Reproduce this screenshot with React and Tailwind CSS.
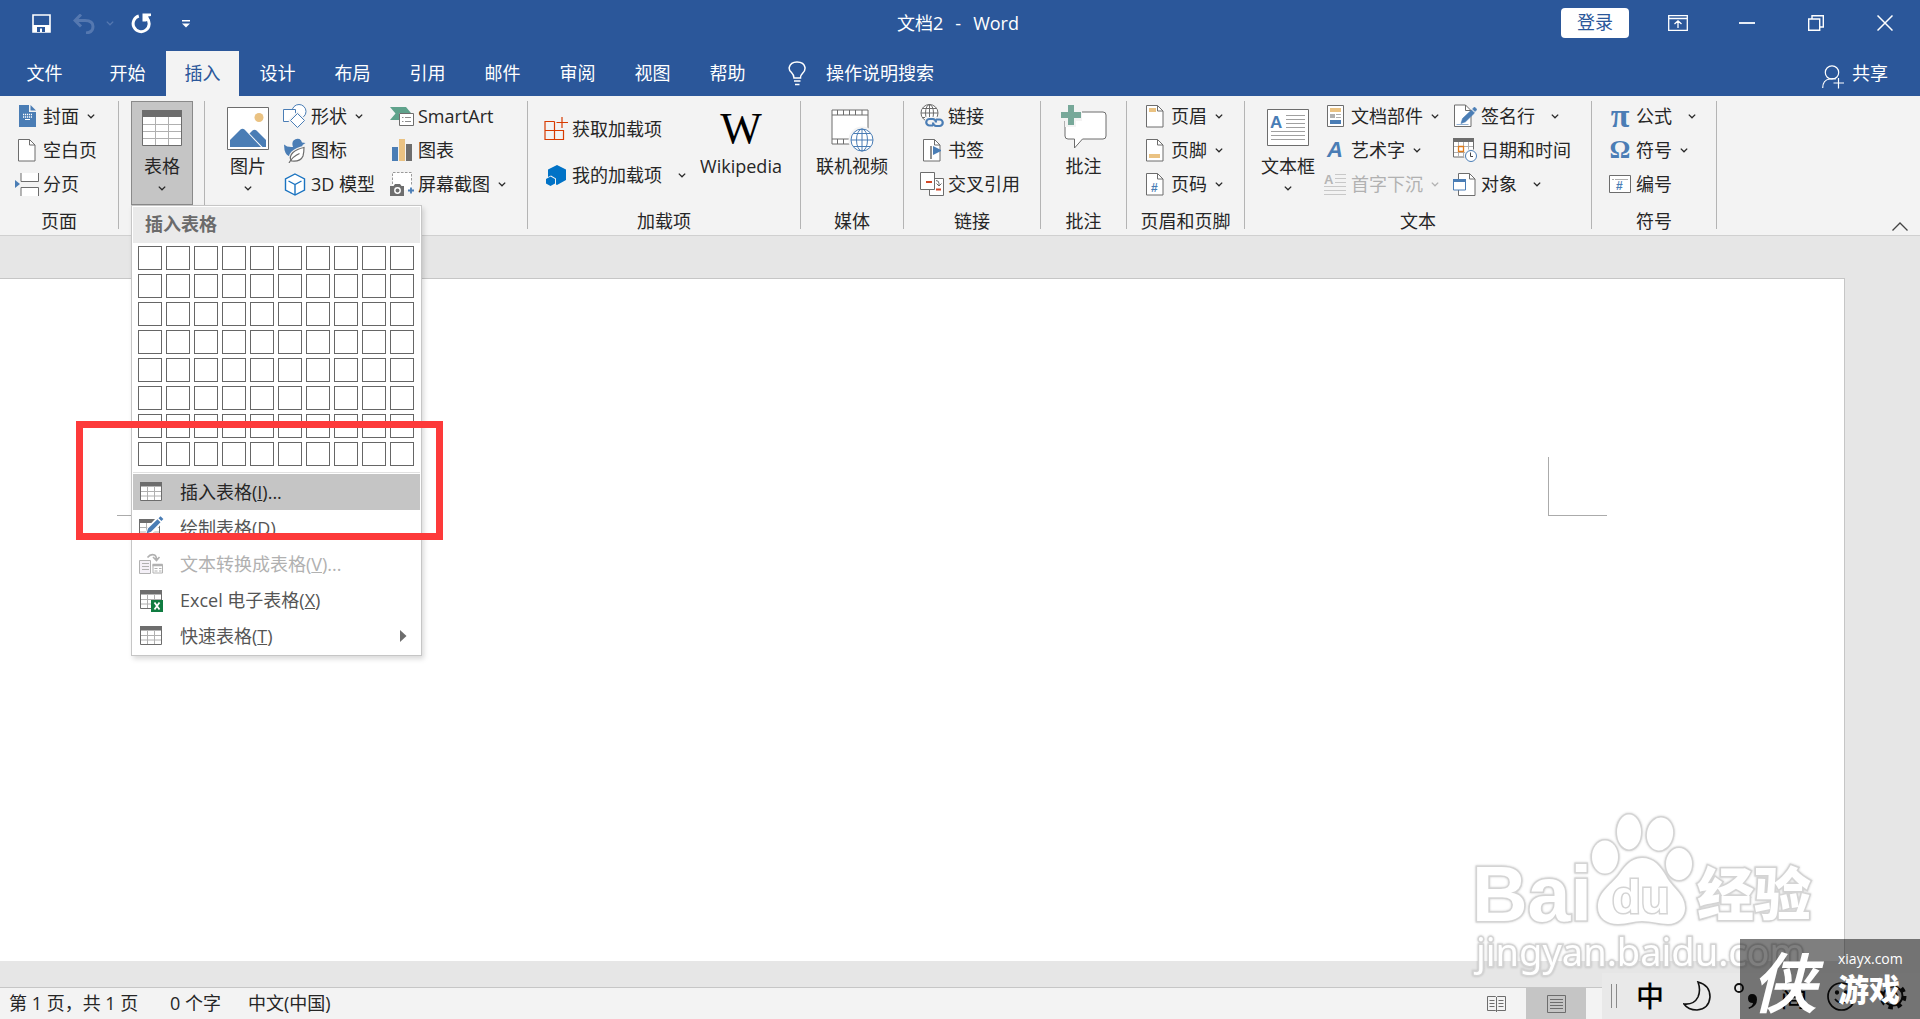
import React, { useState } from "react";

const TABS = ["文件", "开始", "插入", "设计", "布局", "引用", "邮件", "审阅", "视图", "帮助"];

/* ---------- shared bits ---------- */

function Chevron({ className = "" }) {
    return (
        <svg className={`shrink-0 ${className}`} width="8" height="5" viewBox="0 0 8 5" fill="none" stroke="currentColor" strokeWidth="1.3">
            <path d="M.8 .6L4 3.800 7.200 .6" />
        </svg>
    );
}

function Page({ children }) {
    return (
        <svg width="18" height="23" viewBox="0 0 18 23" fill="none">
            <path d="M.5 .5h11l5.500 5.500v16H.5z" fill="#fff" stroke="#6d6d6d" />
            <path d="M11.500 .5v5.500H17" stroke="#6d6d6d" />
            {children}
        </svg>
    );
}

function Grid({ children }) {
    return (
        <svg width="24" height="23" viewBox="0 0 24 23" fill="none">
            <path d="M1.500 3h21v16.500h-21z" fill="#fff" stroke="#6d6d6d" />
            <path d="M2 10.500h20M2 15h20M8.500 6v13M15.500 6v13" stroke="#b0b0b0" />
            <path d="M1 1h22v4.500H1z" fill="#6d6d6d" />
            {children}
        </svg>
    );
}

/* ---------- ribbon icons ---------- */

function CoverIcon() {
    return (
        <svg width="17" height="22" viewBox="0 0 17 22">
            <path d="M0 0h10v7h7v15H0z" fill="#4a7db5" />
            <path d="M11.500 0v5.500H17z" fill="#4a7db5" />
            <path d="M4 9.500h9M4 12h9" stroke="#fff" strokeWidth="1.500" strokeDasharray="1.200 .8" />
            <path d="M6 14.500h5" stroke="#fff" />
        </svg>
    );
}

function BreakIcon() {
    return (
        <svg width="24" height="24" viewBox="0 0 24 24" fill="none">
            <path d="M6 1v8.500h17.500V1M6 24v-8.500h17.500V24" fill="#fff" stroke="#6d6d6d" />
            <path d="M0 8l5 4-5 4z" fill="#4a7db5" />
        </svg>
    );
}

function TableIcon() {
    return (
        <svg width="40" height="38" viewBox="0 0 40 38" fill="none">
            <path d="M.5 1h39v34.500H.5z" fill="#fff" stroke="#6d6d6d" />
            <path d="M1 14.500h38M1 21.500h38M1 28.500h38M13.500 7v28M26.500 7v28" stroke="#b0b0b0" />
            <path d="M0 0h40v7H0z" fill="#6d6d6d" />
        </svg>
    );
}

function PictureIcon() {
    return (
        <svg width="42" height="43" viewBox="0 0 42 43" fill="none">
            <path d="M.5 .5h41v42H.5z" fill="#fff" stroke="#6d6d6d" />
            <circle cx="32" cy="10.500" r="4.500" fill="#eac282" />
            <path d="M3 40v-7l10.500-10.500q2-1.500 4 0L34 40z" fill="#4a7db5" />
            <path d="M22.500 26.500l3-3q2-1.500 4 0L39 33v7h-3.500z" fill="#4a7db5" />
        </svg>
    );
}

function ShapesIcon() {
    return (
        <svg width="24" height="24" viewBox="0 0 24 24" fill="#fff" stroke="#4a7db5">
            <circle cx="16" cy="7.500" r="7" />
            <path d="M.5 5.500h12v12H.5z" />
            <path d="M14.500 9l7.500 7.500-7.500 7.500L7 16.500z" stroke="#f3f3f3" strokeWidth="3" />
            <path d="M14.500 9.500l7 7-7 7-7-7z" />
        </svg>
    );
}

function DuckIcon() {
    return (
        <svg width="24" height="25" viewBox="0 0 24 25" fill="none">
            <path d="M1 6.500q3 3 9 2.500Q8.500 5 10.500 2.500 13 0 16.500 1q2 1 2.500 3.500l3.500 .5-3 2q0 3-1.500 4Q11 12 8 18.500 3 18 1.500 12z" fill="#4a7db5" />
            <path d="M21 9.500Q14 11 10 14.500q-4.500 4.500-1.500 8.500 9 1 11.500-5Q21 14 21 9.500z" fill="#fff" stroke="#f3f3f3" strokeWidth="3.500" />
            <path d="M21 9.500Q14 11 10 14.500q-4.500 4.500-1.500 8.500 9 1 11.500-5Q21 14 21 9.500z" fill="#fff" stroke="#6d6d6d" strokeWidth="1.200" />
            <path d="M6 25q3.500-6.500 10.500-9.500" stroke="#6d6d6d" strokeWidth="1.200" />
        </svg>
    );
}

function CubeIcon() {
    return (
        <svg width="22" height="23" viewBox="0 0 22 23" fill="none" stroke="#1a73c0" strokeWidth="1.400">
            <path d="M11 1l9.500 5v11L11 22 1.500 17V6z" fill="#fff" />
            <path d="M4.500 8l6.500 3.500L17.500 8M11 11.500V22" />
        </svg>
    );
}

function SmartArtIcon() {
    return (
        <svg width="24" height="19" viewBox="0 0 24 19" fill="none">
            <path d="M0 0h16l5 6H9v7H0l5.500-6.500z" fill="#5fa28b" />
            <path d="M9.500 6.500h14v12h-14z" fill="#fff" stroke="#6d6d6d" />
            <path d="M12 10.500h1.500M15 10.500h6M12 14.500h1.500M15 14.500h6" stroke="#8d8d8d" />
        </svg>
    );
}

function ChartIcon() {
    return (
        <svg width="20" height="22" viewBox="0 0 20 22">
            <path d="M0 8h6v14H0z" fill="#4a7db5" />
            <path d="M7 0h6v22H7z" fill="#eac282" />
            <path d="M14 5h6v17h-6z" fill="#6d6d6d" />
        </svg>
    );
}

function ScreenshotIcon() {
    return (
        <svg width="24" height="24" viewBox="0 0 24 24" fill="none">
            <path d="M2.500 1h19v17h-19z" fill="#fff" />
            <path d="M2.500 12V.5h19v13" stroke="#9a9a9a" strokeDasharray="2.500 1.500" />
            <path d="M0 14h3.500l1.500-2h5l1.500 2H14v10H0z" fill="#6d6d6d" />
            <circle cx="7.500" cy="18.500" r="2.700" stroke="#fff" strokeWidth="1.400" />
            <path d="M21 15.500v6M18 18.500h6" stroke="#4a7db5" strokeWidth="1.800" />
        </svg>
    );
}

function StoreIcon() {
    return (
        <svg width="24" height="24" viewBox="0 0 24 24" fill="none" stroke="#d83b01" strokeWidth="1.200">
            <path d="M10.500 4.500H1v18h18.500v-9H1M10.500 4.500v18M18 0v11M12.500 5.500H24" />
        </svg>
    );
}

function MyAddinsIcon() {
    return (
        <svg width="22" height="21" viewBox="0 0 22 21" fill="#0072c6">
            <path d="M12 0l9 4.500v10.500L12 20l-1-.5v-6L6 10.500l-3 1.500V4.500z" />
            <path d="M5.500 11.500l4.500 2.500v4.500L5.500 21 1 18.500V14z" />
        </svg>
    );
}

function VideoIcon() {
    return (
        <svg className="shrink-0" width="43" height="46" viewBox="0 -3 43 46" fill="none">
            <path d="M1 1h36v34H1z" fill="#fff" stroke="#6d6d6d" />
            <path d="M1 6h36M1 30h36M6.500 1v5M12.500 1v5M18.500 1v5M24.500 1v5M31 1v5M6.500 30v5M12.500 30v5" stroke="#6d6d6d" />
            <circle cx="31" cy="31" r="13.500" fill="#f3f3f3" />
            <circle cx="31" cy="31" r="11" fill="#fff" stroke="#4a7db5" />
            <path d="M20 31h22M22.500 24.500h17M22.500 37.500h17M31 20v22" stroke="#4a7db5" />
            <ellipse cx="31" cy="31" rx="5.500" ry="11" stroke="#4a7db5" />
        </svg>
    );
}

function LinkIcon() {
    return (
        <svg width="24" height="24" viewBox="0 0 24 24" fill="none">
            <circle cx="9.500" cy="9" r="8.500" fill="#fff" stroke="#6d6d6d" />
            <path d="M1 9h17M3 4.500h13M3 13.500h13M9.500 .5v17" stroke="#6d6d6d" />
            <ellipse cx="9.500" cy="9" rx="4" ry="8.500" stroke="#6d6d6d" />
            <path d="M5 13h19v11H5z" fill="#f3f3f3" />
            <path d="M13 21.500H9.500a3 3 0 010-6.500H13q3 .5 3 3.500M16 15.500h3.500a3 3 0 010 6.500H16q-3-.5-3-3.500" stroke="#4a7db5" strokeWidth="2.200" />
        </svg>
    );
}

function CrossRefIcon() {
    return (
        <svg width="24" height="24" viewBox="0 0 24 24" fill="none">
            <path d="M9.500 6.500h14v17h-14z" fill="#fff" stroke="#6d6d6d" />
            <path d="M.5 .5h14v17H.5z" fill="#fff" stroke="#6d6d6d" />
            <path d="M6 10h6M16 17.500h5" stroke="#d24726" strokeWidth="2" />
            <path d="M16 8.500q3 0 3 3v2M16.500 11.500l2.500 2.500 2.500-2.500" stroke="#6d6d6d" />
        </svg>
    );
}

function CommentIcon() {
    return (
        <svg className="shrink-0" width="46" height="48" viewBox="0 0 46 48" fill="none">
            <path d="M6 7h36q3 0 3 3v21q0 3-3 3H21.500L13.500 43v-9H7q-3 0-3-3V9z" fill="#fff" stroke="#6d6d6d" />
            <path d="M-1 6h6v-6h10v6h6v10h-6v6H4v-6h-5z" fill="#f3f3f3" />
            <path d="M7 0h6v7h7v6h-7v7H7v-7H0V7h7z" fill="#77a899" />
        </svg>
    );
}

function TextBoxIcon() {
    return (
        <svg width="42" height="39" viewBox="0 0 42 39" fill="none">
            <path d="M.5 .5h41v36H.5z" fill="#fff" stroke="#6d6d6d" />
            <text x="3" y="19" fontFamily="Liberation Sans" fontWeight="700" fontSize="17" fill="#4a7db5">A</text>
            <path d="M19 6.500h19M19 10.500h19M19 14.500h19M19 18.500h19M4 22.500h34M4 26.500h34M4 30.500h34" stroke="#a0a0a0" />
        </svg>
    );
}

function PartsIcon() {
    return (
        <svg width="17" height="22" viewBox="0 0 17 22" fill="none">
            <path d="M.5 .5h16v21H.5z" fill="#fff" stroke="#6d6d6d" />
            <path d="M3 3h11v4H3z" fill="#eac282" />
            <path d="M3 9h5v4H3z" fill="#b0b0b0" />
            <path d="M9 9.500h5M9 12.500h5" stroke="#b0b0b0" />
            <path d="M3 15h11v4H3z" fill="#4a7db5" />
        </svg>
    );
}

function DropCapIcon() {
    return (
        <svg width="22" height="23" viewBox="0 0 22 23" fill="none">
            <text x="0" y="11" fontFamily="Liberation Sans" fontWeight="700" fontSize="13" fill="#b5b5b5">A</text>
            <path d="M11 1.500h11M11 5.500h11M11 9.500h11M0 13.500h22M0 17.500h22M0 21.500h22" stroke="#c8c8c8" />
        </svg>
    );
}

function SignatureIcon() {
    return (
        <svg width="24" height="24" viewBox="0 0 24 24" fill="none">
            <path d="M1.500 1h11l5.500 5.500v16h-16.500z" fill="#fff" stroke="#6d6d6d" />
            <path d="M12.500 1v5.500H18" stroke="#6d6d6d" />
            <path d="M8 19.500l1.500-5L18.500 6l3 3-9 8.800zM19.500 5l2-2 2.500 2.500-2 2zM3.500 20.500h12" fill="#4a7db5" stroke="#4a7db5" strokeWidth=".6" />
        </svg>
    );
}

function DateIcon() {
    return (
        <svg width="24" height="24" viewBox="0 0 24 24" fill="none">
            <path d="M.5 1h20v18H.5z" fill="#fff" stroke="#6d6d6d" />
            <path d="M1 8.500h19M1 14.500h19M5.500 4v15M10.500 4v15M15.500 4v15" stroke="#b0b0b0" />
            <path d="M0 0h21v4H0z" fill="#6d6d6d" />
            <path d="M5.500 8.500h5v5h-5z" fill="#fff" stroke="#e07b1a" strokeWidth="1.300" />
            <circle cx="18" cy="18" r="7" fill="#f3f3f3" />
            <circle cx="18" cy="18" r="5.500" fill="#fff" stroke="#4a7db5" />
            <path d="M17.500 14.500v4H20" stroke="#444" />
        </svg>
    );
}

function ObjectIcon() {
    return (
        <svg width="24" height="23" viewBox="0 0 24 23" fill="none">
            <path d="M5.500 .5h11l5.500 5.500v16.500H5.500z" fill="#fff" stroke="#6d6d6d" />
            <path d="M16.500 .5v5.500H22" stroke="#6d6d6d" />
            <path d="M.5 7h12v10H.5z" fill="#fff" stroke="#4a7db5" />
            <path d="M0 6h13v3H0z" fill="#4a7db5" />
        </svg>
    );
}

function NumberIcon() {
    return (
        <svg width="22" height="18" viewBox="0 0 22 18" fill="none">
            <path d="M.5 .5h21v17H.5z" fill="#fff" stroke="#6d6d6d" />
            <path d="M3 4.500h2M6 4.500h13" stroke="#b0b0b0" />
            <text x="7" y="15" fontFamily="Liberation Sans" fontWeight="700" fontSize="12" fill="#4a7db5">#</text>
        </svg>
    );
}

/* ---------- ribbon building blocks ---------- */

function Group({ label, className, children }) {
    return (
        <>
            <section aria-label={label} className={`flex shrink-0 flex-col ${className}`}>
                <div className="flex h-[104px] items-start">{children}</div>
                <div className="pt-1 text-center leading-6">{label}</div>
            </section>
            <div className="h-32 w-px shrink-0 bg-[#b4b4b4]" />
        </>
    );
}

function Item({ icon, children, arrow, disabled }) {
    return (
        <button disabled={disabled} className="flex h-[30px] items-center whitespace-nowrap disabled:text-[#b1b1b1]">
            <span className="mr-1 flex w-6 shrink-0 justify-center">{icon}</span>
            {children}
            {arrow && <Chevron className={arrow === "wide" ? "ml-4" : "ml-2"} />}
        </button>
    );
}

function Column({ className = "", children }) {
    return <div className={`flex flex-col gap-1 ${className}`}>{children}</div>;
}

function BigButton({ icon, children, arrow, className = "" }) {
    return (
        <button className={`flex flex-col items-center whitespace-nowrap pt-1.5 ${className}`}>
            <span className="flex h-[43px] items-center justify-center">{icon}</span>
            <span className="mt-1 leading-6">{children}</span>
            {arrow && <Chevron className="mt-2" />}
        </button>
    );
}

/* ---------- insert table menu ---------- */

function MenuItem({ icon, active, disabled, more, children }) {
    return (
        <button
            role="menuitem"
            disabled={disabled}
            className={`flex h-9 w-full items-center pl-[6px] pr-[13px] text-left disabled:text-[#b1b1b1] ${active ? "bg-[#c5c5c5] text-[#262626]" : "text-[#555]"}`}
        >
            <span className="mr-[17px] flex w-6 shrink-0">{icon}</span>
            <span className="flex-1">{children}</span>
            {more && (
                <svg width="7" height="12" viewBox="0 0 7 12" fill="#6d6d6d">
                    <path d="M0 0l6.500 6L0 12z" />
                </svg>
            )}
        </button>
    );
}

function TableMenu() {
    const [hover, setHover] = useState(null);

    return (
        <div role="menu" className="absolute left-0 top-full z-10 w-[291px] border border-[#c6c6c6] bg-white p-px shadow-[2px_3px_5px_rgba(0,0,0,0.15)]">
            <div className="h-9 bg-[#eaeaea] pl-3 font-bold leading-[34px] text-[#6b6b6b]">插入表格</div>
            <div className="grid w-fit grid-cols-10 gap-1 px-[5px] pb-1.5 pt-[3px]" onMouseLeave={() => setHover(null)}>
                {Array.from({ length: 80 }, (_, i) => {
                    const row = Math.floor(i / 10);
                    const col = i % 10;
                    const on = hover && row <= hover.row && col <= hover.col;
                    return (
                        <button
                            key={i}
                            aria-label={`${col + 1}x${row + 1}`}
                            onMouseEnter={() => setHover({ row, col })}
                            className={`size-6 border ${on ? "border-[#e8762c] bg-[#fbe3d2]" : "border-[#666] bg-white"}`}
                        />
                    );
                })}
            </div>
            <div className="mb-px h-px bg-[#e1e1e1]" />
            <MenuItem active icon={<Grid />}>插入表格(<u>I</u>)...</MenuItem>
            <MenuItem
                icon={
                    <svg className="shrink-0" width="26" height="24" viewBox="0 0 26 24" fill="none">
                        <path d="M.5 4h20v17H.5z" fill="#fff" stroke="#6d6d6d" />
                        <path d="M1 11.500h19M1 16h19M7.500 7v13M14.500 7v13" stroke="#b0b0b0" />
                        <path d="M0 3h20v4H0z" fill="#6d6d6d" />
                        <path d="M6 19l2.500-8L18 1h3l4 4-11 12z" fill="#fff" />
                        <path d="M7.500 17.500l1.500-5L18.500 3.200l3 3-9.500 9.500zM19.500 2.200l2-2 2.900 2.900-2 2z" fill="#4a7db5" />
                    </svg>
                }
            >
                绘制表格(<u>D</u>)
            </MenuItem>
            <MenuItem
                disabled
                icon={
                    <svg width="24" height="22" viewBox="0 0 24 22" fill="none" stroke="#b1b1b1">
                        <path d="M.5 7.500h11v13H.5z" fill="#f4f0f7" />
                        <path d="M3 10.500h7M3 13.500h7M3 16.500h7M14 11.500h9.500v8.500H14zM15.500 15.500h3M20 15.500h2.500M15.500 18h3M20 18h2.500" />
                        <path d="M13.500 11.500h10M13.500 12.500h10" strokeWidth="1.500" />
                        <path d="M8.500 4.500q3-4 7-2.500 2 1 2 4.500M14 4l3.500 3.500L20.500 4" strokeWidth="1.600" />
                    </svg>
                }
            >
                文本转换成表格(<u>V</u>)...
            </MenuItem>
            <MenuItem
                icon={
                    <Grid>
                        <path d="M12 11h12v12H12z" fill="#107c41" />
                        <path d="M15.500 13.500l5 7M20.500 13.500l-5 7" stroke="#fff" strokeWidth="1.800" />
                    </Grid>
                }
            >
                Excel 电子表格(<u>X</u>)
            </MenuItem>
            <MenuItem more icon={<Grid />}>快速表格(<u>T</u>)</MenuItem>
        </div>
    );
}

/* ---------- title bar and tabs ---------- */

function TitleBar() {
    return (
        <header className="relative flex h-[51px] items-center justify-between pb-1.5 text-white">
            <div className="flex items-center pl-8 pt-0.5">
                <button aria-label="保存">
                    <svg width="19" height="19" viewBox="0 0 19 19" fill="none">
                        <path d="M1 1h17v17H1z" stroke="#fff" strokeWidth="1.600" />
                        <path d="M1 11h17v7H1z" fill="#fff" />
                        <path d="M5 13h8v5H5z" fill="#2b579a" />
                        <path d="M8 14.500h2V18H8z" fill="#fff" />
                    </svg>
                </button>
                <button aria-label="撤消" disabled className="ml-[22px] flex items-center text-[#5578b0]">
                    <svg width="22" height="20" viewBox="0 0 22 20" fill="none" stroke="currentColor" strokeWidth="3">
                        <path d="M2 6.500h10q8 0 8 6 0 6-7 6.500M8 .5L2 6.500l6 6" />
                    </svg>
                    <Chevron className="ml-[11px]" />
                </button>
                <button aria-label="重复" className="ml-[17px]">
                    <svg width="21" height="21" viewBox="0 0 21 21" fill="none">
                        <path d="M7.800 3A8 8 0 1015.800 5" stroke="#fff" strokeWidth="3" />
                        <path d="M11.500 .5H20V3l-3 .5 1.500 3L15 8.500h-3.500z" fill="#fff" />
                    </svg>
                </button>
                <button aria-label="自定义快速访问工具栏" className="ml-[30px]">
                    <svg width="8" height="8" viewBox="0 0 8 8" fill="#fff">
                        <path d="M0 0h8v1.400H0zM0 3.500h8L4 7.500z" />
                    </svg>
                </button>
            </div>
            {/* Document name sits in the middle of the window */}
            <h1 className="pointer-events-none absolute inset-x-0 flex justify-center gap-3 pr-1 leading-6">
                <span>文档2</span>
                <span>-</span>
                <span>Word</span>
            </h1>
            <div className="flex items-center pr-px">
                <button className="mr-[14px] h-[30px] w-[68px] rounded-sm bg-white text-[#2b579a]">登录</button>
                <button aria-label="功能区显示选项" className="flex w-[69px] justify-center">
                    <svg width="20" height="16" viewBox="0 0 20 16" fill="none" stroke="#fff" strokeWidth="1.300">
                        <path d="M.7 .7h18.600v14.600H.7zM.7 3.500h18.600M10 13V6M6.500 9L10 5.800 13.500 9" />
                    </svg>
                </button>
                <button aria-label="最小化" className="flex w-[69px] justify-center">
                    <span className="h-0.5 w-4 bg-[#e6ecf5]" />
                </button>
                <button aria-label="还原" className="flex w-[69px] justify-center">
                    <svg width="16" height="16" viewBox="0 0 16 16" fill="none" stroke="#fff" strokeWidth="1.400">
                        <path d="M.7 4h11v11.300H.7zM4 4V.7h11.300V12H12" />
                    </svg>
                </button>
                <button aria-label="关闭" className="flex w-[69px] justify-center">
                    <svg width="16" height="16" viewBox="0 0 16 16" fill="none" stroke="#fff" strokeWidth="1.500">
                        <path d="M.5 .5l15 15M15.500 .5l-15 15" />
                    </svg>
                </button>
            </div>
        </header>
    );
}

function TabBar({ tab, setTab }) {
    return (
        <nav className="flex h-[45px] items-stretch text-white">
            <div className="flex gap-0.5">
                {TABS.map((name, i) => (
                    <button
                        key={name}
                        onClick={() => setTab(name)}
                        className={`${i === 0 ? "w-[89px]" : "w-[73px]"} ${tab === name ? "bg-[#f3f3f3] text-[#2b579a]" : ""}`}
                    >
                        {name}
                    </button>
                ))}
            </div>
            <button className="ml-6 flex items-center">
                <svg width="19" height="25" viewBox="0 0 19 25" fill="none" stroke="#fff" strokeWidth="1.500">
                    <path d="M6 17q0-3-2.500-5.500Q.8 9 1.200 6.500 2.500 1 9 1q7 0 8 5.500.3 3-2.200 5.500T12.500 17zM6 20h6.500M7 23.500h4.500" />
                </svg>
                <span className="ml-[19px]">操作说明搜索</span>
            </button>
            <button className="ml-auto mr-8 flex items-center">
                <svg className="mt-1.5" width="22" height="24" viewBox="0 0 22 24" fill="none" stroke="#fff" strokeWidth="1.200">
                    <circle cx="10" cy="7.500" r="6.700" />
                    <path d="M.7 23q0-8 7-9M14 14q-3-1-6.500 0M16.500 13v10.500M11.500 18h10.500" />
                </svg>
                <span className="ml-2">共享</span>
            </button>
        </nav>
    );
}

function Ribbon() {
    const [open, setOpen] = useState(true);

    return (
        <div className="flex h-[140px] items-start border-b border-[#d0d0d0] bg-[#f3f3f3] pt-[5px] text-[#262626]">
            <Group label="页面" className="w-[118px]">
                <Column className="pl-[15px]">
                    <Item icon={<CoverIcon />} arrow>封面</Item>
                    <Item icon={<Page />}>空白页</Item>
                    <Item icon={<BreakIcon />}>分页</Item>
                </Column>
            </Group>
            <Group label="" className="w-[85px]">
                <div className="relative ml-3">
                    <button
                        onClick={() => setOpen(!open)}
                        className="flex h-[104px] w-[62px] flex-col items-center border border-[#8a8a8a] bg-[#c5c5c5] pt-[5px]"
                    >
                        <span className="flex h-[43px] items-center"><TableIcon /></span>
                        <span className="mt-1 leading-6">表格</span>
                        <Chevron className="mt-2" />
                    </button>
                    {open && <TableMenu />}
                </div>
            </Group>
            <Group label="插图" className="w-[322px]">
                <BigButton className="ml-[22px] w-[42px]" icon={<PictureIcon />} arrow>图片</BigButton>
                <Column className="ml-[14px] w-[107px]">
                    <Item icon={<ShapesIcon />} arrow>形状</Item>
                    <Item icon={<DuckIcon />}>图标</Item>
                    <Item icon={<CubeIcon />}>3D 模型</Item>
                </Column>
                <Column>
                    <Item icon={<SmartArtIcon />}>SmartArt</Item>
                    <Item icon={<ChartIcon />}>图表</Item>
                    <Item icon={<ScreenshotIcon />} arrow>屏幕截图</Item>
                </Column>
            </Group>
            <Group label="加载项" className="w-[272px]">
                <div className="flex w-[160px] flex-col gap-4 pl-4 pt-[13px]">
                    <Item icon={<StoreIcon />}>获取加载项</Item>
                    <Item icon={<MyAddinsIcon />} arrow="wide">我的加载项</Item>
                </div>
                <BigButton
                    className="ml-2 w-[90px]"
                    icon={<span className="font-['Liberation_Serif'] text-[44px] leading-10 text-black">W</span>}
                >
                    Wikipedia
                </BigButton>
            </Group>
            <Group label="媒体" className="w-[102px]">
                <BigButton className="w-full" icon={<VideoIcon />}>联机视频</BigButton>
            </Group>
            <Group label="链接" className="w-[136px]">
                <Column className="pl-4">
                    <Item icon={<LinkIcon />}>链接</Item>
                    <Item
                        icon={
                            <Page>
                                <path d="M8 7v13" stroke="#6d6d6d" strokeWidth="1.500" />
                                <path d="M10 7l9 4.500-9 4.500z" fill="#4a7db5" />
                            </Page>
                        }
                    >
                        书签
                    </Item>
                    <Item icon={<CrossRefIcon />}>交叉引用</Item>
                </Column>
            </Group>
            <Group label="批注" className="w-[85px]">
                <BigButton className="w-full" icon={<CommentIcon />}>批注</BigButton>
            </Group>
            <Group label="页眉和页脚" className="w-[117px]">
                <Column className="pl-4">
                    <Item icon={<Page><path d="M3 3h7v4H3z" fill="#eac282" /></Page>} arrow>页眉</Item>
                    <Item icon={<Page><path d="M3 15h11v4H3z" fill="#eac282" /></Page>} arrow>页脚</Item>
                    <Item
                        icon={
                            <Page>
                                <text x="5" y="19" fontFamily="Liberation Sans" fontWeight="700" fontSize="12" fill="#4a7db5">#</text>
                            </Page>
                        }
                        arrow
                    >
                        页码
                    </Item>
                </Column>
            </Group>
            <Group label="文本" className="w-[346px]">
                <BigButton className="ml-4 w-[54px]" icon={<TextBoxIcon />} arrow>文本框</BigButton>
                <Column className="ml-2 w-[130px]">
                    <Item icon={<PartsIcon />} arrow>文档部件</Item>
                    <Item icon={<span className="font-['Liberation_Sans'] text-[22px] font-bold italic leading-6 text-[#4a7db5]">A</span>} arrow>艺术字</Item>
                    <Item icon={<DropCapIcon />} arrow disabled>首字下沉</Item>
                </Column>
                <Column>
                    <Item icon={<SignatureIcon />} arrow="wide">签名行</Item>
                    <Item icon={<DateIcon />}>日期和时间</Item>
                    <Item icon={<ObjectIcon />} arrow="wide">对象</Item>
                </Column>
            </Group>
            <Group label="符号" className="w-[124px]">
                <Column className="pl-4">
                    <Item icon={<span className="font-['Liberation_Serif'] text-[34px] font-bold leading-6 text-[#4a7db5]">π</span>} arrow="wide">公式</Item>
                    <Item icon={<span className="font-['Liberation_Serif'] text-[26px] font-bold leading-6 text-[#4a7db5]">Ω</span>} arrow>符号</Item>
                    <Item icon={<NumberIcon />}>编号</Item>
                </Column>
            </Group>
            <button aria-label="折叠功能区" className="mb-1 ml-auto mr-3 self-end">
                <svg width="16" height="9" viewBox="0 0 16 9" fill="none" stroke="#444" strokeWidth="1.300">
                    <path d="M.5 8.500L8 1l7.500 7.500" />
                </svg>
            </button>
        </div>
    );
}

/* ---------- document, status bar, overlays ---------- */

function DocumentArea() {
    return (
        <main className="flex flex-1 bg-[#e6e6e6] pb-[26px] pr-[75px] pt-[42px]">
            <div className="flex flex-1 items-start justify-between border-r border-t border-[#c6c6c6] bg-white pl-[117px] pr-[237px] pt-[178px]">
                {/* Margin corner marks */}
                <div className="h-[59px] w-[59px] border-b border-r border-[#ababab]" />
                <div className="h-[59px] w-[59px] border-b border-l border-[#ababab]" />
            </div>
        </main>
    );
}

function StatusBar() {
    return (
        <footer className="flex h-8 items-stretch border-t border-[#c6c6c6] bg-[#f3f3f3] pl-[9px] leading-[30px] text-[#262626]">
            <span className="w-[161px]">第 1 页，共 1 页</span>
            <span className="w-[78px]">0 个字</span>
            <span>中文(中国)</span>
            <div className="ml-auto mr-[334px] flex">
                <button aria-label="阅读视图" className="flex w-[60px] items-center justify-center">
                    <svg width="19" height="18" viewBox="0 0 19 18" fill="none" stroke="#6d6d6d">
                        <path d="M.5 1.500h8l1 1 1-1h8v14h-8l-1 1-1-1h-8zM9.500 2v15M2.500 5.500h5M2.500 8.500h5M2.500 11.500h5M11.500 5.500h5M11.500 8.500h5M11.500 11.500h5" />
                    </svg>
                </button>
                <button aria-label="页面视图" className="flex w-[60px] items-center justify-center bg-[#c5c5c5]">
                    <svg width="19" height="18" viewBox="0 0 19 18" fill="none" stroke="#6d6d6d">
                        <path d="M.5 .5h18v17H.5zM3 4.500h13M3 7.500h13M3 10.500h13M3 13.500h13" />
                    </svg>
                </button>
            </div>
        </footer>
    );
}

function ImeBar() {
    return (
        <div className="absolute bottom-0 right-0 flex h-[46px] w-[318px] items-center bg-[#e9e9e9] pl-[9px] text-black">
            <div className="h-6 w-1.5 border-x border-[#8a8a8a]" />
            <span className="ml-[19px] text-[28px] font-medium leading-8">中</span>
            <svg className="ml-[19px]" width="28" height="30" viewBox="0 0 28 30" fill="none" stroke="#111" strokeWidth="1.600">
                <path d="M15 1Q27 4 27 16q-1 12-13 13Q5 29 1 23q10 1 14-7 3-7 0-15z" />
            </svg>
            <svg className="ml-[23px]" width="24" height="28" viewBox="0 0 24 28" fill="none">
                <circle cx="5" cy="6" r="4" stroke="#111" strokeWidth="1.800" />
                <path d="M18 12q5 0 5 5.500 0 7-8 9.500l-.5-1.500q4-1.500 4.500-4.500-5 0-5-4.500t4-4.500z" fill="#111" />
            </svg>
            <span className="ml-[22px] text-[28px] leading-8">简</span>
            <svg className="ml-[19px]" width="29" height="29" viewBox="0 0 29 29" fill="none" stroke="#111" strokeWidth="1.700">
                <circle cx="14.500" cy="14.500" r="13.500" />
                <path d="M8 17q6.500 8 13 0" />
                <circle cx="10" cy="10.500" r="1.300" fill="#111" />
                <circle cx="19" cy="10.500" r="1.300" fill="#111" />
            </svg>
            <svg className="ml-[23px]" width="28" height="28" viewBox="0 0 28 28" fill="none" stroke="#111">
                <circle cx="14" cy="14" r="11.500" strokeWidth="4" strokeDasharray="4.500 4.530" />
                <circle cx="14" cy="14" r="9.500" strokeWidth="2" />
                <circle cx="14" cy="14" r="4" strokeWidth="1.800" />
            </svg>
        </div>
    );
}

function BaiduMark() {
    return (
        <svg
            className="pointer-events-none absolute bottom-[34px] right-[85px] drop-shadow-[0_0_1px_rgba(0,0,0,0.2)]"
            width="365"
            height="175"
            viewBox="0 0 365 175"
            fill="#fff"
            stroke="#d4d4d4"
            strokeWidth="3"
            paintOrder="stroke"
        >
            <text x="2" y="111" fontFamily="Liberation Sans" fontWeight="700" fontSize="77">Bai</text>
            <ellipse cx="135" cy="47" rx="13" ry="16.500" />
            <ellipse cx="159" cy="22" rx="12" ry="17.500" />
            <ellipse cx="190" cy="24" rx="13" ry="16.500" transform="rotate(10 190 24)" />
            <ellipse cx="209" cy="54" rx="13" ry="16" />
            <path d="M172 48C160 48 154 58 148 66 140 76 128 82 128 97 128 108 137 114 148 114 158 114 163 111 172 111 181 111 190 114 198 114 208 114 215 107 215 98 215 84 202 78 196 66 190 56 184 48 172 48z" />
            <text x="142" y="103" fontFamily="Liberation Sans" fontWeight="700" fontSize="47">du</text>
            <text x="227" y="105" fontFamily="Noto Sans CJK SC" fontWeight="900" fontSize="57">经验</text>
            <text x="6" y="156" fontFamily="Noto Sans" fontSize="38">jingyan.baidu.com</text>
        </svg>
    );
}

function SiteBadge() {
    return (
        <div className="absolute bottom-0 right-0 flex h-20 w-[180px] items-center bg-black/50 pl-3 text-white">
            <span className="font-['Noto_Sans_CJK_SC',sans-serif] text-[64px] italic leading-[64px] [-webkit-text-stroke:2px_white]">侠</span>
            <div className="ml-[22px] flex flex-col">
                <span className="text-[14px] leading-5">xiayx.com</span>
                <span className="text-[31px] font-black leading-10">游戏</span>
            </div>
        </div>
    );
}

function App() {
    const [tab, setTab] = useState("插入");

    return (
        <div className="relative flex min-h-screen flex-col overflow-hidden bg-[#2b579a] font-['Open_Sans','Noto_Sans_CJK_SC',sans-serif] text-[18px]">
            <TitleBar />
            <TabBar tab={tab} setTab={setTab} />
            <Ribbon />
            <DocumentArea />
            <StatusBar />
            <ImeBar />
            <BaiduMark />
            <SiteBadge />
            {/* Highlight frame around the menu entry */}
            <div className="pointer-events-none absolute left-[76px] top-[421px] z-20 h-[119px] w-[367px] border-[7px] border-[#fd3a3a]" />
        </div>
    );
}

export default App;
